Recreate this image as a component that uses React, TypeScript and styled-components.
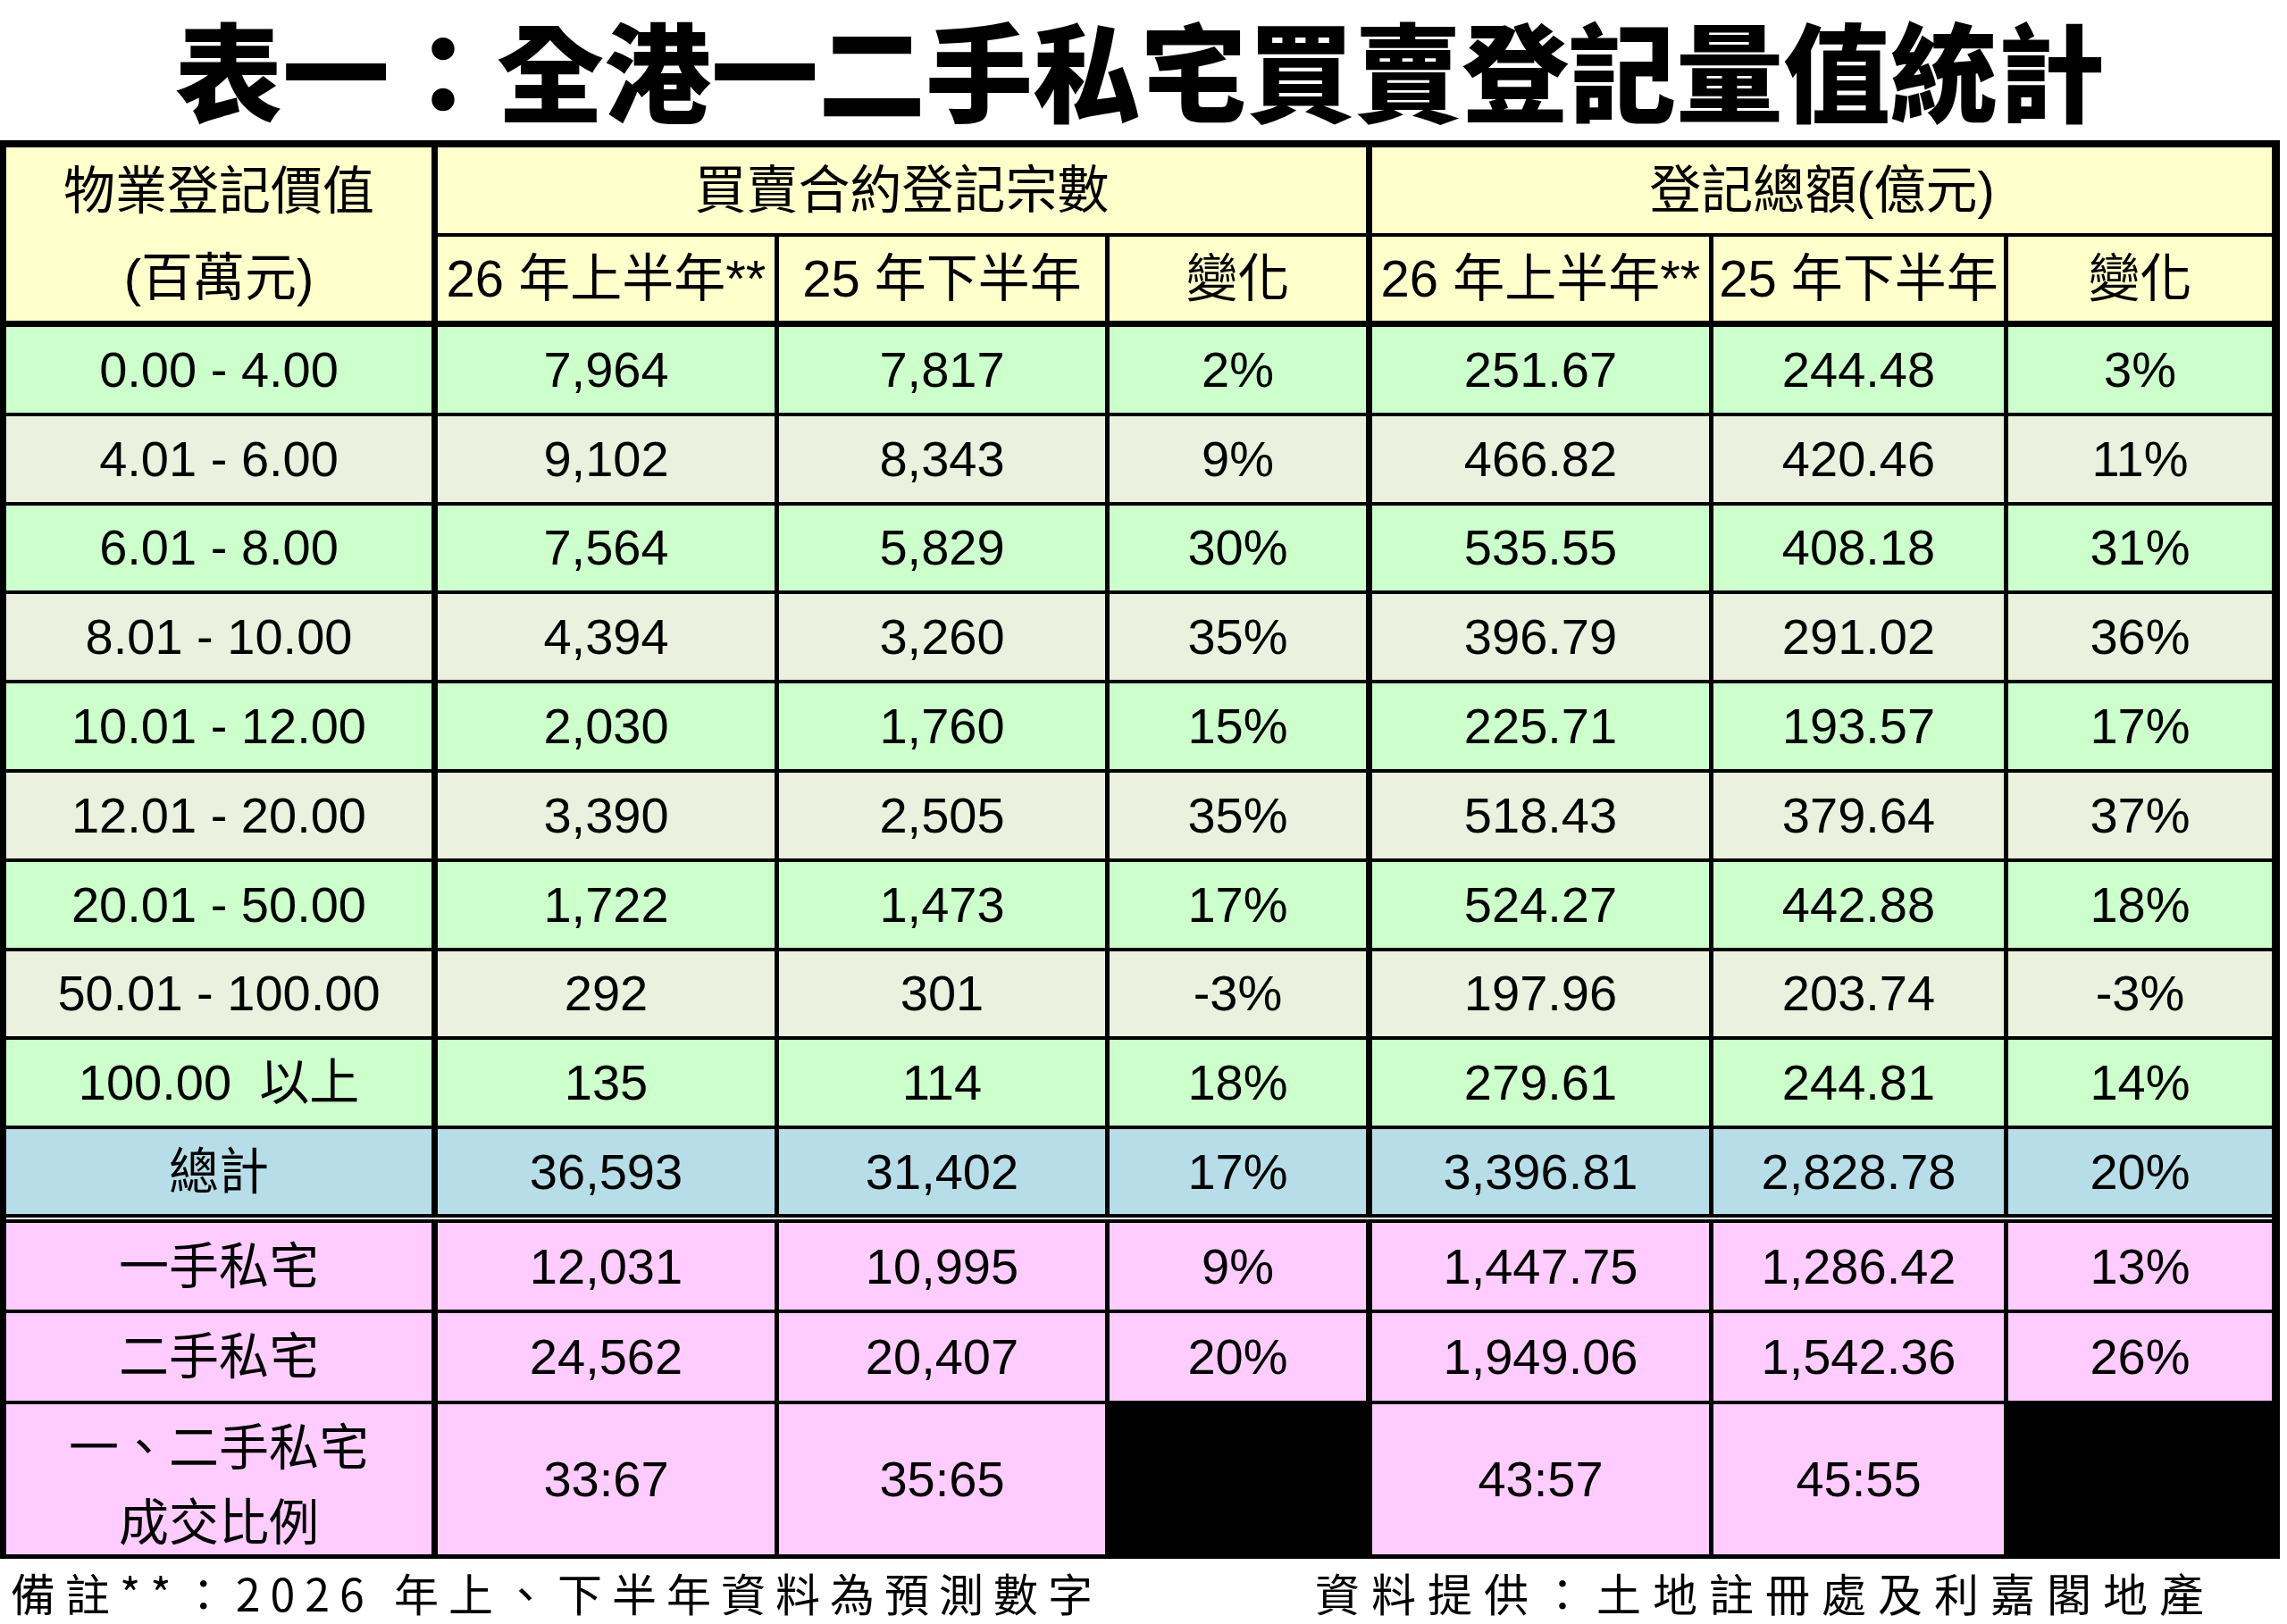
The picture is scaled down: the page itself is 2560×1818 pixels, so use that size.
import React from "react";
import styled, { createGlobalStyle } from "styled-components";

const GlobalStyle = createGlobalStyle`
  html, body {
    margin: 0;
    padding: 0;
    background: #ffffff;
  }
  * { box-sizing: border-box; }
`;

const COLORS = {
  head: "#FFFFCC",
  green: "#CCFFCC",
  beige: "#EBF1DE",
  blue: "#B7DEE8",
  pink: "#FFCCFF",
  black: "#000000",
};

type Bg = keyof typeof COLORS;

const Page = styled.div`
  width: 2552px;
  font-family: "Liberation Sans", "Noto Sans CJK TC", sans-serif;
  color: #000;
`;

const Title = styled.h1`
  margin: 0;
  height: 157px;
  overflow: visible;
  text-align: center;
  white-space: nowrap;
  font-family: "Noto Sans CJK TC", "Noto Sans CJK SC", sans-serif;
  font-weight: 900;
  font-size: 120px;
  line-height: 152px;
`;

const Grid = styled.div`
  display: grid;
  background: #000;
  padding: 8px 9px 5px 7px;
  column-gap: 5px;
  row-gap: 4px;
  grid-template-columns: 478px 377px 365px 289px 377px 325px 295px;
  grid-template-rows: 96px 97px repeat(9, 95.8px) 95px 2px 97px 98px 168px;
`;

const Cell = styled.div<{ $bg: Bg; $thick?: boolean; $headBottom?: boolean; $span?: number }>`
  background: ${(p) => COLORS[p.$bg]};
  display: flex;
  align-items: center;
  justify-content: center;
  font-size: 56px;
  line-height: 1;
  white-space: pre;
  border-right: ${(p) => (p.$thick ? "2px solid #000" : "none")};
  border-bottom: ${(p) => (p.$headBottom ? "3px solid #000" : "none")};
  grid-column: ${(p) => (p.$span ? `span ${p.$span}` : "auto")};
`;

const HeadCell = styled(Cell)`
  font-size: 58px;
`;

const CornerCell = styled.div`
  grid-row: 1 / span 2;
  background: ${COLORS.head};
  border-right: 2px solid #000;
  border-bottom: 3px solid #000;
  display: grid;
  grid-template-rows: 98px 1fr;
  font-size: 58px;
  line-height: 1;
`;

const StackLine = styled.div`
  display: flex;
  align-items: center;
  justify-content: center;
`;

const LabelStack = styled.div`
  display: flex;
  flex-direction: column;
  align-items: center;
  justify-content: center;
  gap: 28px;
  padding-top: 14px;
`;

const Separator = styled.div`
  grid-column: 1 / -1;
  background: #ffffff;
`;

const Footer = styled.div`
  height: 73px;
  display: flex;
  align-items: center;
  justify-content: space-between;
  padding: 0 72px 0 12px;
  font-family: "Noto Sans CJK TC", "Liberation Sans", sans-serif;
  font-size: 50px;
  line-height: 1;
`;

const FootNote = styled.span<{ $spacing?: number }>`
  letter-spacing: ${(p) => p.$spacing ?? 11}px;
  white-space: nowrap;
`;

type Row = { cells: string[]; bg: Bg };

const dataRows: Row[] = [
  { cells: ["0.00 - 4.00", "7,964", "7,817", "2%", "251.67", "244.48", "3%"], bg: "green" },
  { cells: ["4.01 - 6.00", "9,102", "8,343", "9%", "466.82", "420.46", "11%"], bg: "beige" },
  { cells: ["6.01 - 8.00", "7,564", "5,829", "30%", "535.55", "408.18", "31%"], bg: "green" },
  { cells: ["8.01 - 10.00", "4,394", "3,260", "35%", "396.79", "291.02", "36%"], bg: "beige" },
  { cells: ["10.01 - 12.00", "2,030", "1,760", "15%", "225.71", "193.57", "17%"], bg: "green" },
  { cells: ["12.01 - 20.00", "3,390", "2,505", "35%", "518.43", "379.64", "37%"], bg: "beige" },
  { cells: ["20.01 - 50.00", "1,722", "1,473", "17%", "524.27", "442.88", "18%"], bg: "green" },
  { cells: ["50.01 - 100.00", "292", "301", "-3%", "197.96", "203.74", "-3%"], bg: "beige" },
  { cells: ["100.00  以上", "135", "114", "18%", "279.61", "244.81", "14%"], bg: "green" },
  { cells: ["總計", "36,593", "31,402", "17%", "3,396.81", "2,828.78", "20%"], bg: "blue" },
];

const pinkRows: Row[] = [
  { cells: ["一手私宅", "12,031", "10,995", "9%", "1,447.75", "1,286.42", "13%"], bg: "pink" },
  { cells: ["二手私宅", "24,562", "20,407", "20%", "1,949.06", "1,542.36", "26%"], bg: "pink" },
];

const subHeads = ["26 年上半年**", "25 年下半年", "變化", "26 年上半年**", "25 年下半年", "變化"];

const renderRow = (row: Row, ri: number) =>
  row.cells.map((c, ci) => (
    <Cell key={`${ri}-${ci}`} $bg={row.bg} $thick={ci === 0 || ci === 3}>
      {c}
    </Cell>
  ));

export default function App() {
  return (
    <>
      <GlobalStyle />
      <Page>
        <Title>表一：全港一二手私宅買賣登記量值統計</Title>
        <Grid>
          <CornerCell>
            <StackLine>物業登記價值</StackLine>
            <StackLine>(百萬元)</StackLine>
          </CornerCell>
          <HeadCell $bg="head" $span={3} $thick>
            買賣合約登記宗數
          </HeadCell>
          <HeadCell $bg="head" $span={3}>
            登記總額(億元)
          </HeadCell>
          {subHeads.map((h, i) => (
            <HeadCell key={`sh-${i}`} $bg="head" $headBottom $thick={i === 2}>
              {h}
            </HeadCell>
          ))}
          {dataRows.map(renderRow)}
          <Separator />
          {pinkRows.map((r, i) => renderRow(r, 100 + i))}
          <Cell $bg="pink" $thick>
            <LabelStack>
              <span>一、二手私宅</span>
              <span>成交比例</span>
            </LabelStack>
          </Cell>
          <Cell $bg="pink">33:67</Cell>
          <Cell $bg="pink">35:65</Cell>
          <Cell $bg="black" $thick />
          <Cell $bg="pink">43:57</Cell>
          <Cell $bg="pink">45:55</Cell>
          <Cell $bg="black" />
        </Grid>
        <Footer>
          <FootNote>備註**：2026 年上、下半年資料為預測數字</FootNote>
          <FootNote $spacing={13}>資料提供：土地註冊處及利嘉閣地產</FootNote>
        </Footer>
      </Page>
    </>
  );
}
